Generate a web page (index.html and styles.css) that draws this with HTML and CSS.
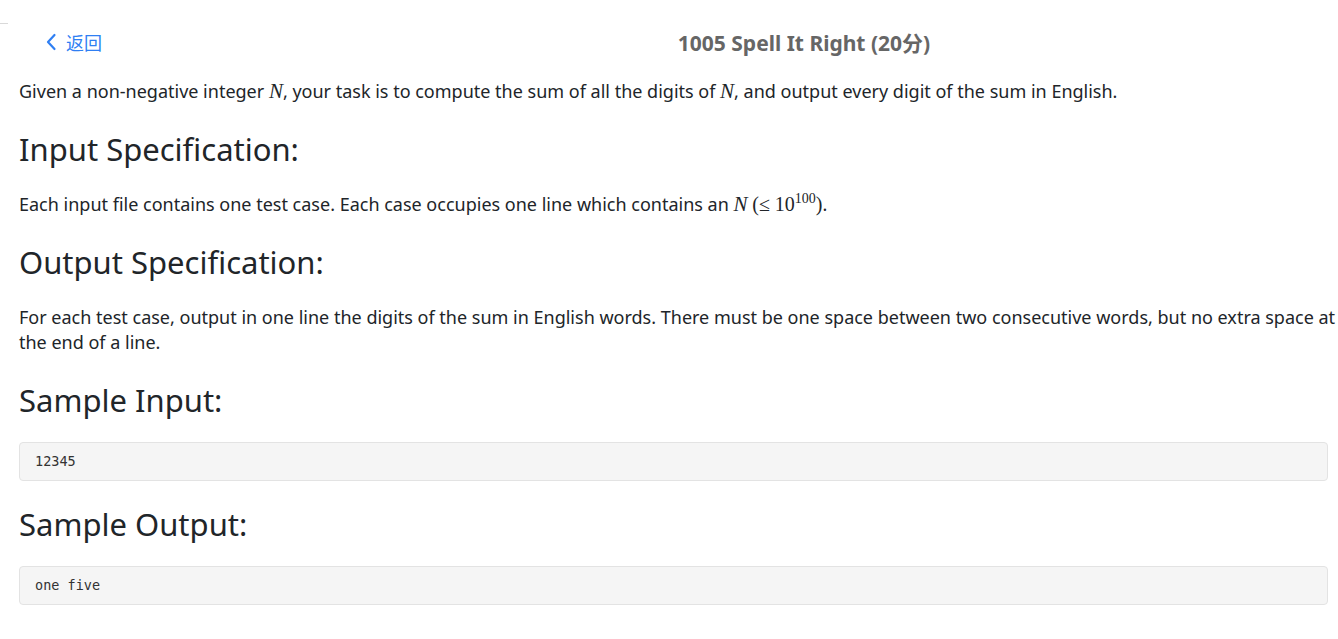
FILE: index.html
```html
<!DOCTYPE html>
<html lang="en">
<head>
<meta charset="utf-8">
<title>1005 Spell It Right</title>
<link rel="stylesheet" href="styles.css">
</head>
<body>
<div class="topline"></div>
<header class="bar">
  <a class="back" href="#">
    <svg class="chev" width="12" height="18" viewBox="0 0 12 18"><path d="M9.5 2 L3 9 L9.5 16" fill="none" stroke="#2f7ff3" stroke-width="2.2" stroke-linecap="round" stroke-linejoin="round"/></svg>
    <span>返回</span>
  </a>
  <h1 class="title">1005 Spell It Right (20分)</h1>
</header>
<main class="content">
  <p>Given a non-negative integer <span class="m">N</span>, your task is to compute the sum of all the digits of <span class="m">N</span>, and output every digit of the sum in English.</p>
  <h2>Input Specification:</h2>
  <p>Each input file contains one test case. Each case occupies one line which contains an <span class="m">N</span> <span class="r">(≤ 10<sup>100</sup>)</span>.</p>
  <h2>Output Specification:</h2>
  <p>For each test case, output in one line the digits of the sum in English words. There must be one space between two consecutive words, but no extra space at the end of a line.</p>
  <h2>Sample Input:</h2>
  <pre class="code">12345</pre>
  <h2>Sample Output:</h2>
  <pre class="code">one five</pre>
</main>
</body>
</html>
```
FILE: styles.css
```css
html, body { margin: 0; padding: 0; background: #fff; }
body { font-family: "Noto Sans", "Noto Sans CJK SC", sans-serif; color: #212529; }
.topline { width: 8px; height: 1px; background: #d9d9d9; margin-top: 23px; }
.bar { display: flex; align-items: center; height: 40px; margin-top: -2px; }
.back { width: 270px; padding-left: 45px; box-sizing: border-box; display: flex; align-items: center; gap: 9px; color: #2f7ff3; text-decoration: none; font-size: 18px; font-family: "Noto Sans CJK SC", sans-serif; }
.chev { display: block; }
.title { flex: 1; margin: 0; text-align: center; font-size: 21px; font-weight: 700; color: #666; font-family: "Noto Sans", "Noto Sans CJK SC", sans-serif; }
.content { padding: 0 10px 0 19px; }
p { font-size: 18px; line-height: 25px; margin: 17px -10px 0 0; }
h2 { font-size: 31px; font-weight: 400; margin: 25px 0 0; line-height: 40px; }
h2 + p { margin-top: 23px; }
pre + h2 { margin-top: 23px; }
.m { font-family: "Liberation Serif", serif; font-style: italic; font-size: 21px; line-height: 0; }
.r { font-family: "Liberation Serif", serif; font-size: 20px; line-height: 0; }
.r sup { font-size: 14px; line-height: 0; }
.code { background: #f5f5f5; border: 1px solid #e3e3e3; border-radius: 4px; margin: 22px 0 0; padding: 10px 15px; font-family: "DejaVu Sans Mono", monospace; font-size: 13.5px; line-height: 17px; color: #333; }
```
